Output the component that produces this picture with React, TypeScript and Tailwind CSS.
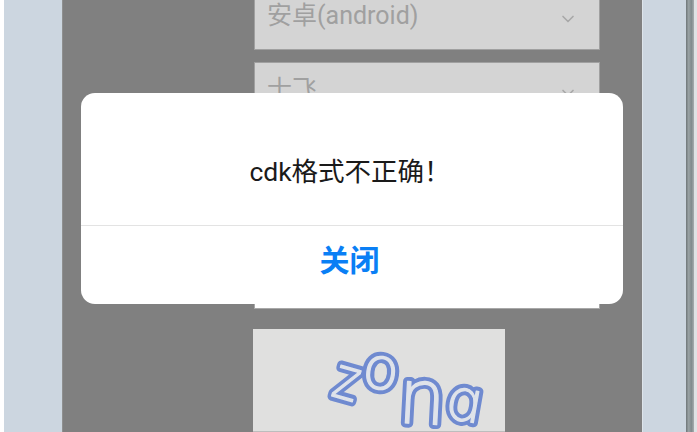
import React from 'react';
import { ChevronDown } from 'lucide-react';

const font = "font-['Roboto','Noto_Sans_CJK_SC',sans-serif]";

const SelectField: React.FC<{ label: string; className?: string }> = ({ label, className = '' }) => (
  <div className={`relative flex h-[62px] w-[346px] shrink-0 items-center border border-[#a0a0a0] bg-[#d4d4d4] pl-[12px] text-[25px] text-[#a0a0a0] ${className}`}>
    <span className="-mt-[6px]">{label}</span>
    <ChevronDown className="absolute right-[21px] top-[20px] h-[20px] w-[20px] text-[#a8a8a8]" strokeWidth={2} />
  </div>
);

const captchaLetters = [
  { ch: 'z', x: 81, y: 70, size: 56, rot: 16, sx: 0.88, sy: 1.05, cx: 92, cy: 52 },
  { ch: 'o', x: 109, y: 60, size: 58, rot: 8, sx: 1.05, sy: 1, cx: 130, cy: 44 },
  { ch: 'n', x: 145, y: 95, size: 76, rot: 3, sx: 1, sy: 1, cx: 172, cy: 72 },
  { ch: 'ɑ', x: 190, y: 92, size: 58, rot: 10, sx: 1.02, sy: 1, cx: 212, cy: 78 },
];

const Captcha: React.FC = () => (
  <div className="mt-[20px] h-[103px] w-[252px] shrink-0 -translate-x-px border-b border-[#bdbdbd] bg-[#e0e0df]">
    <svg width="252" height="102" viewBox="0 0 252 102" className="blur-[0.4px]">
      <g fontFamily="'DejaVu Sans', sans-serif" fontWeight="200" strokeLinejoin="round">
        {captchaLetters.map((l) => (
          <g key={l.ch} transform={`rotate(${l.rot} ${l.cx} ${l.cy})`}>
            <text x={l.x / l.sx} y={l.y / l.sy} fontSize={l.size} transform={`scale(${l.sx} ${l.sy})`} fill="#6f8ad0" stroke="#6f8ad0" strokeWidth={9}>
              {l.ch}
            </text>
            <text x={l.x / l.sx} y={l.y / l.sy} fontSize={l.size} transform={`scale(${l.sx} ${l.sy})`} fill="#dfe3ea" stroke="#dfe3ea" strokeWidth={1.2}>
              {l.ch}
            </text>
          </g>
        ))}
      </g>
    </svg>
  </div>
);

const App: React.FC = () => {
  return (
    <div className={`relative flex h-[432px] w-[697px] overflow-hidden bg-[#dfe2e4] ${font}`}>
      <div className="w-[4px] shrink-0 bg-white" />
      <div className="w-[58px] shrink-0 bg-[#ccd6e0]" />

      {/* dimmed page */}
      <div className="flex w-[580px] shrink-0 flex-col items-start border-l border-[#8f9090] bg-[#808080] pl-[191px]">
        <SelectField label="安卓(android)" className="-mt-[12px]" />
        <SelectField label="士飞" className="mt-[12px]" />
        <div className="mt-[60px] h-[125px] w-[346px] shrink-0 border border-[#a8a8a8] bg-white" />
        <Captcha />
      </div>

      <div className="w-[44px] shrink-0 border-l border-[#dde4ea] bg-[#ccd6e0]" />
      <div className="w-[8px] shrink-0 bg-[linear-gradient(90deg,#6d7577,#9aa3a5,#7f8a8c,#a7adaf)]" />
      <div className="flex-1 bg-[#dfe2e4]" />

      {/* alert */}
      <div className="absolute left-[81px] top-[93px] flex h-[211px] w-[542px] flex-col rounded-[14px] bg-white">
        <div className="flex h-[133px] items-center justify-center border-b border-[#e3e3e3] pr-[4px] pt-[26px] text-[26.5px] text-[#1a1a1a]">
          {'cdk格式不正确\uFF01'}
        </div>
        <div className="flex flex-1 items-center justify-center pb-[10px] pr-[5px] text-[30px] font-bold text-[#0a7ff5]">
          关闭
        </div>
      </div>
    </div>
  );
};

export default App;
